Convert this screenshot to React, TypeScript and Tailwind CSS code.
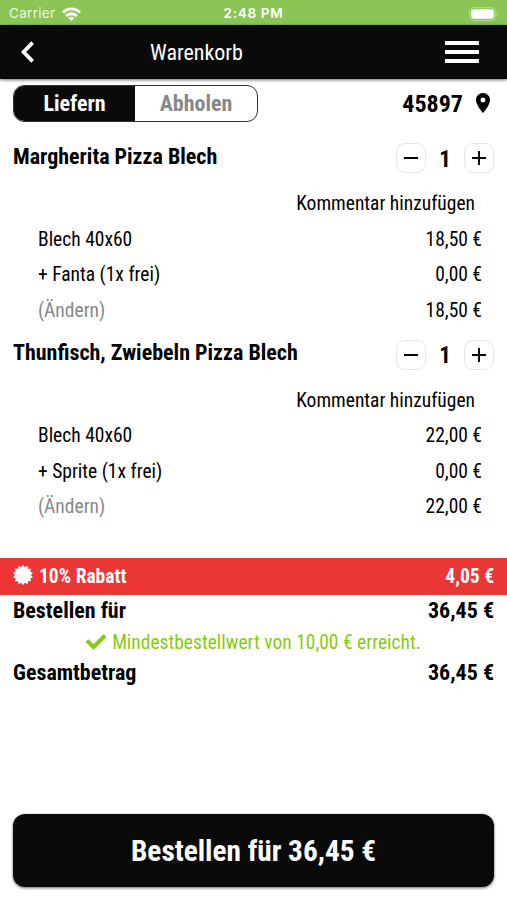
import { FaCheck } from "react-icons/fa";
import { MdLocationOn } from "react-icons/md";

interface CartLine {
  label: string;
  price: string;
  muted?: boolean;
}

interface CartItem {
  name: string;
  quantity: number;
  lines: CartLine[];
}

const items: CartItem[] = [
  {
    name: "Margherita Pizza Blech",
    quantity: 1,
    lines: [
      { label: "Blech 40x60", price: "18,50 €" },
      { label: "+ Fanta (1x frei)", price: "0,00 €" },
      { label: "(Ändern)", price: "18,50 €", muted: true },
    ],
  },
  {
    name: "Thunfisch, Zwiebeln Pizza Blech",
    quantity: 1,
    lines: [
      { label: "Blech 40x60", price: "22,00 €" },
      { label: "+ Sprite (1x frei)", price: "0,00 €" },
      { label: "(Ändern)", price: "22,00 €", muted: true },
    ],
  },
];

const WifiIcon = () => (
  <svg width="19" height="14" viewBox="0 0 19 14" fill="none" stroke="white" strokeWidth="2.8" className="-mt-[1px]">
    <path d="M1 5.4a12 12 0 0 1 17 0" />
    <path d="M4 9a7.8 7.8 0 0 1 11 0" />
    <path d="M9.5 14 6.4 11.1a4.4 4.4 0 0 1 6.2 0z" fill="white" stroke="none" />
  </svg>
);

const BatteryIcon = () => (
  <svg width="30" height="14" viewBox="0 0 30 14" className="-mt-[1px]">
    <rect x="0.7" y="0.7" width="25.6" height="12.6" rx="3.8" fill="none" stroke="white" strokeOpacity="0.4" />
    <rect x="2.2" y="2.2" width="22.6" height="9.6" rx="2.4" fill="white" />
    <path d="M27.8 5v4a2.2 2.2 0 0 0 0-4z" fill="white" fillOpacity="0.4" />
  </svg>
);

// Starburst with fourteen teeth
const BADGE_POINTS = Array.from({ length: 28 }, (_, i) => {
  const r = i % 2 === 0 ? 10.2 : 8;
  const a = (i * Math.PI) / 14;
  return `${(10 + r * Math.sin(a)).toFixed(2)},${(10 - r * Math.cos(a)).toFixed(2)}`;
}).join(" ");

const BadgeIcon = () => (
  <svg width="20" height="20" viewBox="0 0 20 20" className="-mt-[2px]">
    <polygon points={BADGE_POINTS} fill="white" />
  </svg>
);

const StatusBar = () => (
  <div className="grid h-[25px] grid-cols-3 items-center bg-[#8bc556] px-2 pt-[3px] font-[Inter,sans-serif] text-white [font-stretch:100%]">
    <div className="flex items-center gap-[7px] pl-[1px]">
      <span className="text-[13.5px] tracking-[0.3px] text-white/85">Carrier</span>
      <WifiIcon />
    </div>
    <span className="text-center text-[13.5px] font-semibold tracking-[0.7px]">2:48 PM</span>
    <div className="flex justify-end">
      <BatteryIcon />
    </div>
  </div>
);

const Header = () => (
  <header className="grid h-[54px] grid-cols-[60px_1fr_60px] items-center bg-[#0a0a0a] text-white shadow-[0_1px_3px_rgba(0,0,0,0.6)]">
    <button className="pl-[21px]">
      <svg width="13" height="22" viewBox="0 0 13 22" fill="none" stroke="white" strokeWidth="3.8">
        <path d="M11.6 1.6 2.6 11l9 9.4" />
      </svg>
    </button>
    <h1 className="pt-[1px] pl-[90px] text-[22px]">Warenkorb</h1>
    <button className="-ml-[2px] flex w-[34px] flex-col gap-[5px]">
      <span className="h-1 bg-white" />
      <span className="h-1 bg-white" />
      <span className="h-1 bg-white" />
    </button>
  </header>
);

const DeliveryBar = () => (
  <div className="flex h-[51.5px] items-start justify-between px-[13px] pt-[6px]">
    <div className="flex h-[37px] w-[245px] overflow-hidden rounded-[11px] border border-[#333] text-[22px] font-bold">
      <button className="w-[121px] bg-[#0a0a0a] text-white">Liefern</button>
      <button className="flex-1 text-[#888]">Abholen</button>
    </div>
    <div className="flex h-[37px] items-center gap-[8px] text-[24px] font-bold">
      <span className="pt-[1px]">45897</span>
      <MdLocationOn className="-mr-[1px] mb-[1px] size-[24px]" />
    </div>
  </div>
);

const Stepper = ({ quantity }: { quantity: number }) => (
  <div className="flex items-center">
    <button className="flex size-[30px] items-center justify-center rounded-[9px] border border-[#e6e6e6]">
      <span className="h-[2px] w-[14px] bg-black" />
    </button>
    <span className="w-[38px] pt-[2px] text-center text-[23px] font-bold">{quantity}</span>
    <button className="flex size-[30px] items-center justify-center rounded-[9px] border border-[#e6e6e6]">
      <svg width="14" height="14" viewBox="0 0 14 14" stroke="black" strokeWidth="2">
        <path d="M0 7h14M7 0v14" />
      </svg>
    </button>
  </div>
);

const CartEntry = ({ item }: { item: CartItem }) => (
  <section className="h-[196.5px]">
    <div className="flex h-[54.5px] items-center justify-between px-[13px] pt-[1px]">
      <h2 className="pb-[3px] text-[22px] font-bold">{item.name}</h2>
      <Stepper quantity={item.quantity} />
    </div>
    <div className="flex h-[35.5px] items-center justify-end pt-[2px] pr-8 text-[19.5px]">Kommentar hinzufügen</div>
    {item.lines.map((line) => (
      <div key={line.label} className="flex h-[35.5px] items-center justify-between pt-[2px] pr-[25px] pl-[38px] text-[19.5px]">
        <span className={line.muted ? "text-[#888]" : ""}>{line.label}</span>
        <span>{line.price}</span>
      </div>
    ))}
  </section>
);

const Summary = () => (
  <section className="pt-[34.5px]">
    <div className="flex h-[36.5px] items-center bg-[#ec3535] px-[13px] text-[19.5px] font-bold text-white">
      <BadgeIcon />
      <span className="ml-[6px] flex-1">10% Rabatt</span>
      <span>4,05 €</span>
    </div>
    <div className="flex h-[31.5px] items-center justify-between px-[13px] pt-[2px] text-[22px] font-bold">
      <span>Bestellen für</span>
      <span>36,45 €</span>
    </div>
    <div className="flex h-[31.5px] items-center justify-center gap-[6px] pt-[2px] text-[19.5px] text-[#86cb10]">
      <FaCheck className="-mt-[2px] size-5" />
      <span>Mindestbestellwert von 10,00 € erreicht.</span>
    </div>
    <div className="flex h-[31.5px] items-center justify-between px-[13px] text-[22px] font-bold">
      <span>Gesamtbetrag</span>
      <span>36,45 €</span>
    </div>
  </section>
);

export default function App() {
  return (
    <div className="flex h-[900px] w-[507px] flex-col overflow-hidden bg-white font-['Roboto_Condensed',Roboto,sans-serif] leading-none whitespace-nowrap text-black [font-stretch:75%]">
      <StatusBar />
      <Header />
      <DeliveryBar />
      {items.map((item) => (
        <CartEntry key={item.name} item={item} />
      ))}
      <Summary />
      <footer className="mt-auto px-[13px] pb-[13px]">
        <button className="h-[73px] w-full rounded-xl bg-[#0a0a0a] pt-[2px] text-[29.3px] font-bold text-white shadow-[0_1px_3px_rgba(0,0,0,0.6)]">
          Bestellen für 36,45 €
        </button>
      </footer>
    </div>
  );
}
